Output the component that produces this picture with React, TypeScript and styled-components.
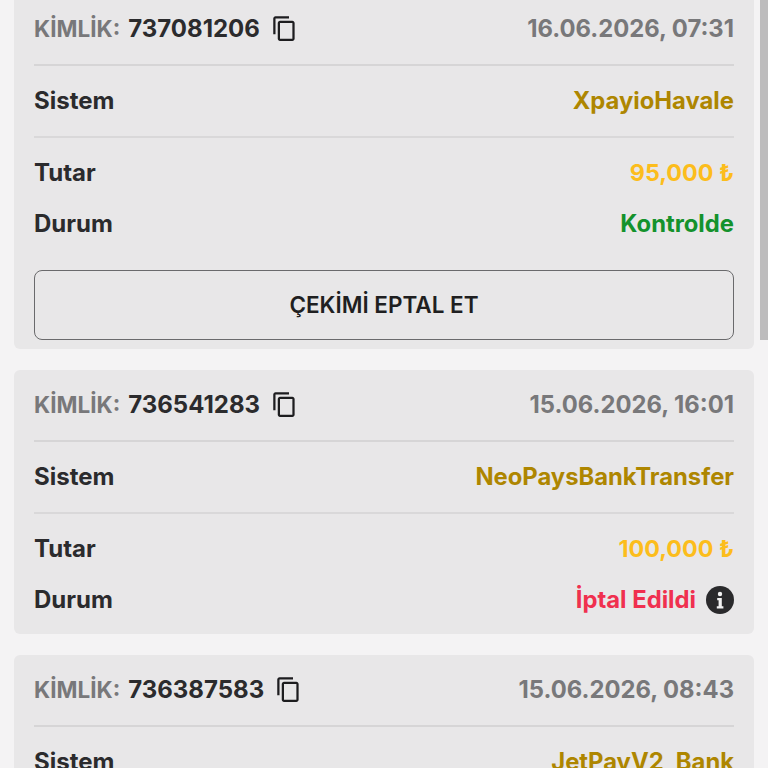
import React from 'react';
import styled, { createGlobalStyle } from 'styled-components';
import { MdOutlineContentCopy } from 'react-icons/md';

const GlobalStyle = createGlobalStyle`
  html, body {
    margin: 0;
    height: 100%;
    overflow: hidden;
    background: #f4f3f4;
  }
  * { box-sizing: border-box; }
`;

const Page = styled.main`
  height: 768px;
  overflow: hidden;
  position: relative;
  font-family: Inter, 'Liberation Sans', sans-serif;
  color: #2b2b2d;
`;

const List = styled.div`
  display: flex;
  flex-direction: column;
  gap: 21px;
  /* list is scrolled a little, first card is cut at the top */
  margin-top: -6px;
  padding: 0 14px;
`;

const ScrollThumb = styled.div`
  position: absolute;
  top: 0;
  right: 0;
  width: 8px;
  height: 340px;
  background: #bdbcbd;
`;

const Card = styled.section<{ $hasAction?: boolean }>`
  background: #e8e7e8;
  border-radius: 6px;
  padding: 0 20px ${(p) => (p.$hasAction ? 9 : 17)}px;
`;

const Header = styled.header`
  display: flex;
  align-items: center;
  justify-content: space-between;
  height: 72px;
  padding-bottom: 2px;
  border-bottom: 2px solid #d6d5d6;
`;

const Kimlik = styled.div`
  display: flex;
  align-items: center;
  font-size: 24px;
  font-weight: 700;
`;

const KimlikLabel = styled.span`
  font-size: 22.5px;
  color: #78787a;
  margin-right: 8px;
`;

const CopyIcon = styled(MdOutlineContentCopy)`
  margin-left: 11px;
  color: #1d1d1f;
`;

const DateText = styled.span`
  font-size: 23.8px;
  font-weight: 700;
  color: #78787a;
`;

const Row = styled.div<{ $divided?: boolean; $height: number }>`
  display: flex;
  align-items: center;
  justify-content: space-between;
  height: ${(p) => p.$height}px;
  padding-bottom: ${(p) => (p.$divided ? 2 : 0)}px;
  border-bottom: ${(p) => (p.$divided ? '2px solid #d9d8d9' : 'none')};
`;

const Label = styled.span`
  font-size: 24px;
  font-weight: 700;
`;

const Value = styled.span<{ $color: string; $size?: number }>`
  display: flex;
  align-items: center;
  gap: 10px;
  font-size: ${(p) => p.$size ?? 23.8}px;
  font-weight: 700;
  color: ${(p) => p.$color};
`;

const InfoIcon = styled.svg`
  width: 28px;
  height: 28px;
  flex: none;
`;

const CancelButton = styled.button`
  display: block;
  width: 100%;
  height: 70px;
  margin-top: 29px;
  padding: 0 0 2px;
  background: transparent;
  border: 1px solid #6a6a6c;
  border-radius: 8px;
  font-family: inherit;
  font-size: 22.5px;
  font-weight: 600;
  color: #1f1f21;
`;

type Withdrawal = {
  id: string;
  date: string;
  system: string;
  amount?: string;
  status?: string;
  statusColor?: string;
  info?: boolean;
  cancellable?: boolean;
};

const rows: Withdrawal[] = [
  {
    id: '737081206',
    date: '16.06.2026, 07:31',
    system: 'XpayioHavale',
    amount: '95,000 ₺',
    status: 'Kontrolde',
    statusColor: '#14922c',
    cancellable: true,
  },
  {
    id: '736541283',
    date: '15.06.2026, 16:01',
    system: 'NeoPaysBankTransfer',
    amount: '100,000 ₺',
    status: 'İptal Edildi',
    statusColor: '#f0304f',
    info: true,
  },
  // rest of this card is below the fold
  {
    id: '736387583',
    date: '15.06.2026, 08:43',
    system: 'JetPayV2_Bank',
  },
];

export default function App() {
  return (
    <Page>
      <GlobalStyle />
      <List>
        {rows.map((r) => (
          <Card key={r.id} $hasAction={r.cancellable}>
            <Header>
              <Kimlik>
                <KimlikLabel>KİMLİK:</KimlikLabel>
                {r.id}
                <CopyIcon size={27} />
              </Kimlik>
              <DateText>{r.date}</DateText>
            </Header>
            <Row $divided $height={72}>
              <Label>Sistem</Label>
              <Value $color="#ae8600">{r.system}</Value>
            </Row>
            {r.amount && (
              <Row $height={68}>
                <Label>Tutar</Label>
                <Value $color="#fcbd1c" $size={23.3}>
                  {r.amount}
                </Value>
              </Row>
            )}
            {r.status && (
              <Row $height={35}>
                <Label>Durum</Label>
                <Value $color={r.statusColor ?? '#2b2b2d'}>
                  {r.status}
                  {r.info && (
                    <InfoIcon viewBox="0 0 28 28">
                      <circle cx="14" cy="14" r="14" fill="#2a2a2c" />
                      <circle cx="14" cy="8" r="2.2" fill="#f2f2f2" />
                      <path d="M11.2 12h4.6v8.2h1.6v2.2h-6.6v-2.2h1.8v-6h-1.4z" fill="#f2f2f2" />
                    </InfoIcon>
                  )}
                </Value>
              </Row>
            )}
            {r.cancellable && <CancelButton>ÇEKİMİ EPTAL ET</CancelButton>}
          </Card>
        ))}
      </List>
      <ScrollThumb />
    </Page>
  );
}
